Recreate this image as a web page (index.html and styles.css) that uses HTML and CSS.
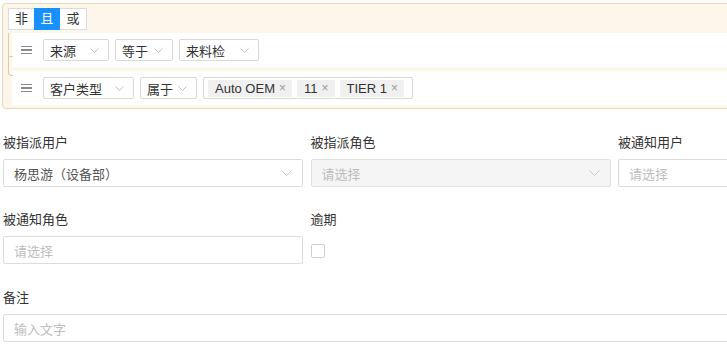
FILE: index.html
```html
<!DOCTYPE html>
<html lang="zh-CN">
<head>
<meta charset="utf-8">
<title>筛选条件</title>
<link rel="stylesheet" href="styles.css">
</head>
<body>
<div class="page">
  <div class="filter">
    <div class="seg">
      <span class="seg-item">非</span>
      <span class="seg-item on">且</span>
      <span class="seg-item">或</span>
    </div>
    <div class="rows">
      <div class="row row-first">
        <span class="handle"><i></i><i></i><i></i></span>
        <div class="sel w-66"><span>来源</span><svg class="chev" width="9" height="5" viewBox="0 0 9 5"><polyline points="0.5,0.5 4.5,4.5 8.5,0.5"/></svg></div>
        <div class="sel w-58"><span>等于</span><svg class="chev" width="9" height="5" viewBox="0 0 9 5"><polyline points="0.5,0.5 4.5,4.5 8.5,0.5"/></svg></div>
        <div class="sel w-80"><span>来料检</span><svg class="chev" width="9" height="5" viewBox="0 0 9 5"><polyline points="0.5,0.5 4.5,4.5 8.5,0.5"/></svg></div>
      </div>
      <div class="row row-last">
        <span class="handle"><i></i><i></i><i></i></span>
        <div class="sel w-91"><span>客户类型</span><svg class="chev" width="9" height="5" viewBox="0 0 9 5"><polyline points="0.5,0.5 4.5,4.5 8.5,0.5"/></svg></div>
        <div class="sel w-57"><span>属于</span><svg class="chev" width="9" height="5" viewBox="0 0 9 5"><polyline points="0.5,0.5 4.5,4.5 8.5,0.5"/></svg></div>
        <div class="tags">
          <span class="tag">Auto OEM<span class="x">×</span></span>
          <span class="tag">11<span class="x">×</span></span>
          <span class="tag">TIER 1<span class="x">×</span></span>
        </div>
      </div>
    </div>
  </div>

  <div class="form">
    <div class="grid">
      <div class="field">
        <label class="label">被指派用户</label>
        <div class="input">
          <span class="value">杨思游（设备部）</span>
          <svg class="chev" width="11" height="6" viewBox="0 0 11 6"><polyline points="0.5,0.5 5.5,5.5 10.5,0.5"/></svg>
        </div>
      </div>
      <div class="field">
        <label class="label">被指派角色</label>
        <div class="input disabled">
          <span class="ph">请选择</span>
          <svg class="chev" width="11" height="6" viewBox="0 0 11 6"><polyline points="0.5,0.5 5.5,5.5 10.5,0.5"/></svg>
        </div>
      </div>
      <div class="field">
        <label class="label">被通知用户</label>
        <div class="input"><span class="ph">请选择</span></div>
      </div>
      <div class="field">
        <label class="label">被通知角色</label>
        <div class="input"><span class="ph">请选择</span></div>
      </div>
      <div class="field">
        <label class="label">逾期</label>
        <div class="check-wrap"><span class="checkbox"></span></div>
      </div>
    </div>
    <div class="field remark">
      <label class="label">备注</label>
      <div class="input wide"><span class="ph">输入文字</span></div>
    </div>
  </div>
</div>
</body>
</html>
```

FILE: styles.css
```css
html, body {
  margin: 0;
  padding: 0;
  background: #fff;
  overflow: hidden;
}
body {
  font-family: "Liberation Sans", "Noto Sans CJK SC", sans-serif;
  font-size: 13px;
  color: #333;
}
.page {
  width: 727px;
  height: 354px;
  overflow: hidden;
}

/* filter builder */
.filter {
  width: 800px;
  margin: 3px 0 0 2px;
  border: 1px solid #ead9b6;
  border-radius: 4px;
  background: #fdf6ea;
  padding: 4px 0 3px 5px;
}
.seg {
  display: flex;
  width: fit-content;
  height: 22px;
  box-sizing: border-box;
  border: 1px solid #dcdcdc;
  background: #fff;
}
.seg-item {
  width: 26px;
  line-height: 20px;
  text-align: center;
  color: #333;
}
.seg-item:first-child { width: 25px; }
.seg-item.on {
  background: #1890ff;
  color: #fff;
  margin: -1px 0;
  line-height: 22px;
}
.rows {
  margin: 3px 0 0 4px;
  display: flex;
  flex-direction: column;
  gap: 4px;
}
.row {
  position: relative;
  height: 34px;
  background: #fff;
  display: flex;
  align-items: center;
  padding-left: 9px;
}
.row::before {
  content: "";
  position: absolute;
  left: -4px;
  width: 4px;
  border-left: 1px solid #d8ccb2;
  border-bottom: 1px solid #d8ccb2;
}
.row-first::before { top: 0; height: 23px; }
.row-last::before { top: -14px; height: 18px; border-bottom-left-radius: 4px; }

.handle {
  width: 11px;
  margin-right: 11px;
  display: flex;
  flex-direction: column;
  gap: 2px;
}
.handle i {
  display: block;
  height: 1.3px;
  background: #8a8a8a;
}
.sel {
  height: 22px;
  box-sizing: border-box;
  border: 1px solid #d9d9d9;
  border-radius: 2px;
  background: #fff;
  display: flex;
  align-items: center;
  justify-content: space-between;
  padding: 0 9px 0 6px;
  margin-right: 6px;
  color: #333;
}
.w-66 { width: 66px; }
.w-58 { width: 58px; }
.w-80 { width: 80px; }
.w-91 { width: 91px; }
.w-57 { width: 57px; }
.chev {
  display: block;
  flex: none;
}
.chev polyline {
  fill: none;
  stroke: #c0c0c0;
  stroke-width: 1;
}
.tags {
  width: 210px;
  height: 22px;
  box-sizing: border-box;
  border: 1px solid #d9d9d9;
  border-radius: 2px;
  background: #fff;
  display: flex;
  align-items: center;
  gap: 5px;
  padding: 0 4px;
}
.tag {
  height: 17px;
  line-height: 17px;
  background: #f0f0f0;
  padding: 0 6px 0 7px;
  color: #333;
  display: inline-flex;
  align-items: center;
}
.tag .x {
  margin-left: 4px;
  font-size: 12px;
  color: #999;
}

/* form */
.form {
  margin-top: 25px;
  padding-left: 3px;
}
.grid {
  display: grid;
  grid-template-columns: repeat(3, 300px);
  column-gap: 7.5px;
  row-gap: 24px;
}
.label {
  display: block;
  height: 18px;
  line-height: 18px;
  margin-bottom: 7px;
  color: #333;
}
.input {
  height: 28px;
  box-sizing: border-box;
  border: 1px solid #dcdcdc;
  border-radius: 2px;
  background: #fff;
  display: flex;
  align-items: center;
  justify-content: space-between;
  padding: 0 10px 0 10px;
}
.input.disabled {
  background: #f5f5f5;
  border-color: #e0e0e0;
}
.value { color: #555; }
.ph { color: #bdbdbd; }
.input .chev polyline { stroke: #c8c8c8; }
.check-wrap {
  height: 28px;
  display: flex;
  align-items: center;
}
.checkbox {
  width: 14px;
  height: 14px;
  box-sizing: border-box;
  border: 1px solid #cfcfcf;
  border-radius: 2px;
  background: #fff;
  margin-top: 1px;
}
.remark {
  margin-top: 25px;
}
.input.wide {
  width: 950px;
}
```
